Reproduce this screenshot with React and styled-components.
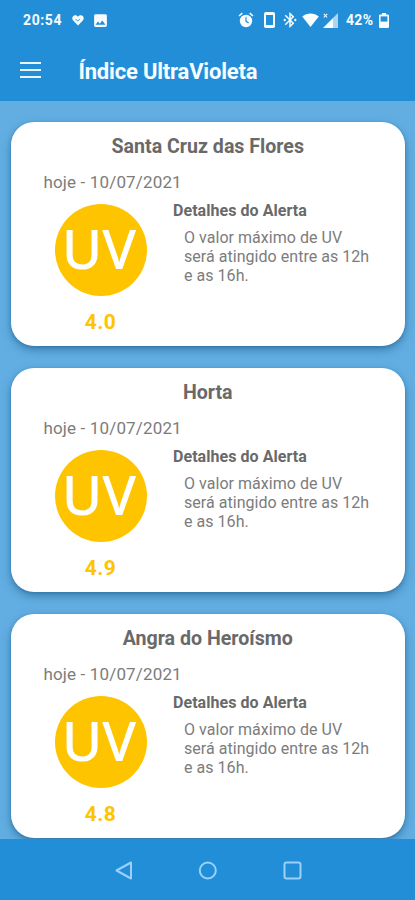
import styled, { createGlobalStyle } from "styled-components";
import { MdImage, MdBluetoothConnected } from "react-icons/md";

const COLOR = {
   BAR: '#228ed8',
   BACKGROUND: '#62aee2',
   TEXT: '#696969',
   LIGHT: '#7c7c7c',
   UV: '#fec400'
}

const GlobalStyle = createGlobalStyle`
   * {
      box-sizing: border-box;
      margin: 0;
      padding: 0;
   }

   body {
      overflow: hidden;
      font-family: Roboto, "Liberation Sans", sans-serif;
   }
`

const Screen = styled.div`
   display: flex;
   flex-direction: column;
   height: 900px;
   width: 415px;
   background-color: ${COLOR.BACKGROUND};
   overflow: hidden;
`

const StatusBar = styled.div`
   display: flex;
   align-items: center;
   justify-content: space-between;
   flex: none;
   height: 40px;
   padding: 0 26px 0 23px;
   background-color: ${COLOR.BAR};
   color: #f7fcff;
   font-size: 14px;
   font-weight: 700;

   svg {
      display: block;
      flex: none;
   }
`

const StatusGroup = styled.div`
   display: flex;
   align-items: center;
`

const Clock = styled.span`
   width: 49px;
   letter-spacing: 0.6px;
`

const Percent = styled.span`
   width: 33px;
   letter-spacing: 0.3px;
`

const StatusIcon = styled.span`
   margin-right: ${props => props.$gap || 0}px;
`

const AppBar = styled.header`
   display: flex;
   align-items: center;
   flex: none;
   height: 61px;
   padding-left: 20px;
   background-color: ${COLOR.BAR};
   color: #f7fcff;
`

const MenuButton = styled.button`
   display: flex;
   flex-direction: column;
   justify-content: space-between;
   width: 21px;
   height: 16px;
   margin-bottom: 2px;
   border: none;
   background: none;

   span {
      width: 100%;
      height: 2px;
      background-color: #e9f5fd;
   }
`

const Title = styled.h1`
   margin: 2px 0 0 37.5px;
   font-size: 22px;
   font-weight: 700;
   letter-spacing: -0.2px;
`

const CardList = styled.main`
   display: flex;
   flex-direction: column;
   flex: 1;
   gap: 21.5px;
   min-height: 0;
   padding: 21px 10.5px 0 11px;
   overflow: hidden;
`

const Card = styled.article`
   flex: none;
   height: 224.4px;
   padding-top: 13px;
   background-color: #fff;
   border-radius: 23px;
   box-shadow: 0 4px 10px #1c5c8a90, 0 1px 3px #1c5c8a60;
`

const City = styled.h2`
   color: ${COLOR.TEXT};
   font-size: 19.6px;
   line-height: 24px;
   font-weight: 700;
   text-align: center;
`

const Day = styled.p`
   margin: 13px 0 0 32.5px;
   color: ${COLOR.LIGHT};
   font-size: 17px;
   line-height: 20px;
   letter-spacing: 0.15px;
`

const Details = styled.div`
   display: flex;
   padding-left: 43.5px;
`

const Level = styled.div`
   display: flex;
   flex-direction: column;
   align-items: center;
   width: 92px;
   padding-top: 12px;
`

const Badge = styled.div`
   display: flex;
   justify-content: center;
   width: 92px;
   height: 92px;
   padding-right: 3px;
   border-radius: 50%;
   background-color: ${COLOR.UV};
   color: white;
   font-family: "Noto Sans", sans-serif;
   font-size: 55px;
   font-weight: 500;
   line-height: 88px;
`

const Value = styled.strong`
   margin-top: 13px;
   color: ${COLOR.UV};
   font-size: 21px;
   line-height: 26px;
   letter-spacing: 0.4px;
`

const Alert = styled.div`
   padding: 10px 0 0 26.5px;

   h3 {
      color: ${COLOR.TEXT};
      font-size: 16px;
      line-height: 18px;
      font-weight: 700;
      letter-spacing: 0.05px;
   }

   p {
      margin: 8px 0 0 11px;
      color: ${COLOR.LIGHT};
      font-size: 16px;
      line-height: 19.2px;
      letter-spacing: 0.04px;
      white-space: pre-line;
   }
`

const NavBar = styled.nav`
   display: flex;
   flex: none;
   height: 61px;
   background-color: ${COLOR.BAR};

   svg {
      display: block;
      margin: auto;
   }
`

const cities = [
   { name: "Santa Cruz das Flores", value: "4.0" },
   { name: "Horta", value: "4.9" },
   { name: "Angra do Heroísmo", value: "4.8" }
]

const Heart = () => (
   <svg width="12" height="12" viewBox="0 0 12 12">
      <path fill="currentColor" d="M6 11.5 1.2 6.6C-.6 4.5.5 1.3 3.2 1.3 4.5 1.3 5.4 2 6 2.8 6.6 2 7.5 1.3 8.8 1.3c2.7 0 3.8 3.2 2 5.3Z" />
      <path d="m3.3 5.9 1.3-.2 1.2 1.5L8.2 4.8" fill="none" stroke={COLOR.BAR} strokeWidth=".8" />
   </svg>
)

const Alarm = () => (
   <svg width="16" height="16" viewBox="0 0 16 16">
      <path d="M1 4 4.3 1.2M15 4l-3.3-2.8" stroke="currentColor" strokeWidth="1.6" />
      <circle cx="8" cy="9" r="6.2" fill="currentColor" />
      <path d="M8 5.3v4l2.7 1.6" fill="none" stroke={COLOR.BAR} strokeWidth="1.2" />
   </svg>
)

const Phone = () => (
   <svg width="11" height="16" viewBox="0 0 11 16">
      <rect width="11" height="16" rx="1.8" fill="currentColor" />
      <rect x="2" y="3" width="7" height="10" fill={COLOR.BAR} />
   </svg>
)

const Wifi = () => (
   <svg width="17" height="14" viewBox="0 0 17 14">
      <path fill="currentColor" d="M8.5 14 .2 3.6c4.6-4 12-4 16.6 0Z" />
   </svg>
)

const Signal = () => (
   <svg width="15" height="15" viewBox="0 0 15 15">
      <path fill="currentColor" d="M10.5 4.5V15H0Z" />
      <path fill="currentColor" opacity=".65" d="M10.5 4.5 15 0v15h-4.5Z" />
      <path d="m.8.8 3.4 3.7M4.2.8.8 4.5" stroke="currentColor" strokeWidth="1.1" />
   </svg>
)

const Battery = () => (
   <svg width="10" height="15" viewBox="0 0 10 15">
      <path fill="currentColor" d="M3 0h4v1.6h1.7A1.3 1.3 0 0 1 10 2.9v10.8A1.3 1.3 0 0 1 8.7 15H1.3A1.3 1.3 0 0 1 0 13.7V2.9a1.3 1.3 0 0 1 1.3-1.3H3Z" />
      <rect x="1.6" y="3.4" width="6.8" height="5.2" fill={COLOR.BAR} />
   </svg>
)

const NavIcons = () => (
   <svg width="415" height="61" viewBox="0 0 415 61" fill="none" stroke="#99d1f9" strokeWidth="2" strokeLinejoin="round">
      <path d="M131 23.5v16L116.5 31.5Z" />
      <circle cx="207.8" cy="31.5" r="8" />
      <rect x="284.5" y="23.5" width="16" height="16" rx="2" />
   </svg>
)

const UvCard = ({ name, value }) => (
   <Card>
      <City>{name}</City>
      <Day>hoje - 10/07/2021</Day>
      <Details>
         <Level>
            <Badge>UV</Badge>
            <Value>{value}</Value>
         </Level>
         <Alert>
            <h3>Detalhes do Alerta</h3>
            <p>{"O valor máximo de UV\nserá atingido entre as 12h\ne as 16h."}</p>
         </Alert>
      </Details>
   </Card>
)

export default function App() {
   return (
      <Screen>
         <GlobalStyle />
         <StatusBar>
            <StatusGroup>
               <Clock>20:54</Clock>
               <StatusIcon $gap={8}><Heart /></StatusIcon>
               <StatusIcon><MdImage size={17} /></StatusIcon>
            </StatusGroup>
            <StatusGroup>
               <StatusIcon $gap={10}><Alarm /></StatusIcon>
               <StatusIcon $gap={6}><Phone /></StatusIcon>
               <StatusIcon $gap={3}><MdBluetoothConnected size={18} /></StatusIcon>
               <StatusIcon $gap={4}><Wifi /></StatusIcon>
               <StatusIcon $gap={8}><Signal /></StatusIcon>
               <Percent>42%</Percent>
               <Battery />
            </StatusGroup>
         </StatusBar>
         <AppBar>
            <MenuButton aria-label="Menu"><span /><span /><span /></MenuButton>
            <Title>Índice UltraVioleta</Title>
         </AppBar>
         <CardList>
            {cities.map(city => <UvCard key={city.name} {...city} />)}
         </CardList>
         <NavBar><NavIcons /></NavBar>
      </Screen>
   )
}
